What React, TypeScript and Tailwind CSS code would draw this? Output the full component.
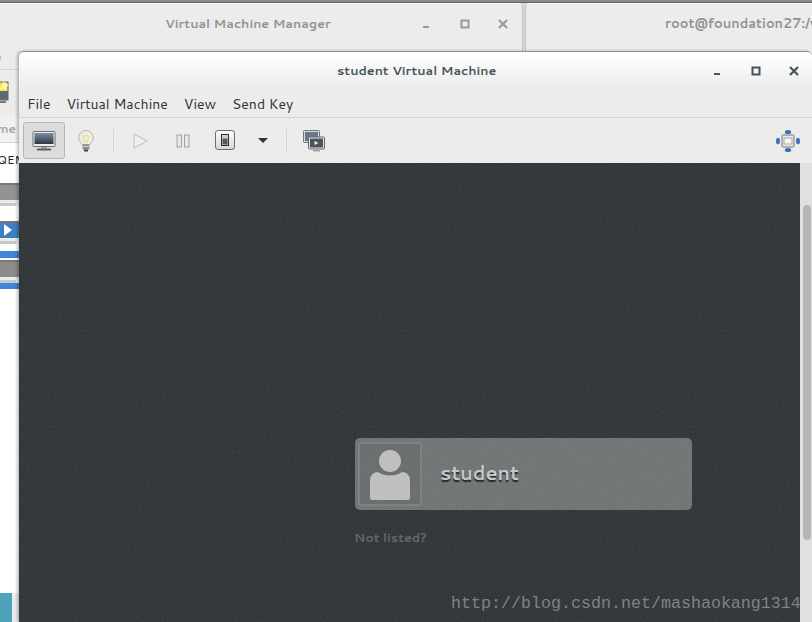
import React from "react";

const uiFont = "font-['Cantarell','Noto_Sans',sans-serif]";

function WindowButtons({ dim }: { dim?: boolean }) {
  const c = dim ? "#9a9a9a" : "#47545c";
  return (
    <div className="flex items-center gap-[28px]">
      <svg width="10" height="10" viewBox="0 0 10 10">
        <rect x="1" y="7" width="6" height="2" fill={c} />
      </svg>
      <svg width="10" height="10" viewBox="0 0 10 10">
        <path d="M1.500 1.500h7v7h-7z" fill="none" stroke={c} strokeWidth="2" />
      </svg>
      <svg width="10" height="10" viewBox="0 0 10 10">
        <path d="M1 1l8 8M9 1l-8 8" fill="none" stroke={c} strokeWidth="2.2" />
      </svg>
    </div>
  );
}

function MonitorIcon() {
  return (
    <svg width="24" height="20" viewBox="0 0 24 20">
      <defs>
        <linearGradient id="scr" x1="0" y1="0" x2="0" y2="1">
          <stop offset="0" stopColor="#7d8ea6" />
          <stop offset="1" stopColor="#2c3644" />
        </linearGradient>
      </defs>
      <rect x="1" y="0.500" width="22" height="15" rx="1" fill="#ececec" stroke="#6f6f6f" />
      <rect x="2.500" y="2" width="19" height="11" fill="url(#scr)" />
      <rect x="9" y="16" width="6" height="1.500" fill="#999" />
      <rect x="5" y="17.500" width="14" height="2" fill="#5a5a5a" />
    </svg>
  );
}

function BulbIcon() {
  return (
    <svg width="16" height="22" viewBox="0 0 16 22">
      <path d="M8 0.500a7.300 7.300 0 0 0-7.300 7.300c0 3 2.300 4.200 3.300 6.700h8c1-2.500 3.300-3.700 3.300-6.700A7.300 7.300 0 0 0 8 0.500z" fill="#ecece8" stroke="#b4b4b0" />
      <path d="M4.500 7.500c1.500-2.500 5.500-2.500 7 0M5.500 8l2 5M10.500 8l-2 5" fill="none" stroke="#eee07a" strokeWidth="1.300" />
      <rect x="4.500" y="14.500" width="7" height="5" rx="1" fill="#8a8a8a" />
      <rect x="4.500" y="16" width="7" height="1" fill="#d5d5d5" />
      <rect x="6" y="19.500" width="4" height="2" fill="#444" />
    </svg>
  );
}

function PlayIcon() {
  return (
    <svg width="15" height="16" viewBox="0 0 15 16">
      <path d="M1 1v14l13-7z" fill="#efefef" stroke="#c6c8c8" strokeWidth="1.200" />
    </svg>
  );
}

function PauseIcon() {
  return (
    <svg width="14" height="14" viewBox="0 0 14 14">
      <rect x="1" y="1" width="4.500" height="12" fill="#e8e8e8" stroke="#a0a2a2" />
      <rect x="8.500" y="1" width="4.500" height="12" fill="#e8e8e8" stroke="#a0a2a2" />
    </svg>
  );
}

function PowerIcon() {
  return (
    <svg width="20" height="21" viewBox="0 0 20 21">
      <defs>
        <linearGradient id="pwr" x1="0" y1="0" x2="0" y2="1">
          <stop offset="0" stopColor="#fdfdfd" />
          <stop offset="1" stopColor="#d6d6d6" />
        </linearGradient>
      </defs>
      <rect x="0.500" y="0.500" width="19" height="19" rx="2.500" fill="url(#pwr)" stroke="#6d6d6d" />
      <rect x="6.500" y="4.500" width="7" height="11" fill="#cfcfcf" stroke="#2f2f2f" />
      <rect x="7.500" y="8.500" width="5" height="6" fill="#5a5a5a" />
    </svg>
  );
}

function SnapshotIcon() {
  return (
    <svg width="22" height="22" viewBox="0 0 22 22">
      <rect x="0.500" y="0.500" width="16" height="12" rx="1" fill="#d9dbdc" stroke="#777" />
      <rect x="2" y="2" width="13" height="9" fill="#6a7888" />
      <rect x="5.500" y="7" width="16" height="12" rx="1" fill="#e6e6e6" stroke="#666" />
      <rect x="7" y="8.500" width="13" height="9" fill="#47535f" />
      <path d="M11.500 11v4l4-2z" fill="#eee" />
      <rect x="10" y="19.500" width="7" height="2" fill="#a5a5a5" />
    </svg>
  );
}

function FullscreenIcon() {
  return (
    <svg width="24" height="22" viewBox="0 0 24 22">
      <ellipse cx="12" cy="2" rx="3.200" ry="2" fill="#3f70b5" />
      <ellipse cx="12" cy="20" rx="3.200" ry="2" fill="#3f70b5" />
      <ellipse cx="2" cy="11" rx="2" ry="3.200" fill="#3f70b5" />
      <ellipse cx="22" cy="11" rx="2" ry="3.200" fill="#3f70b5" />
      <rect x="6" y="5" width="12" height="12" rx="1" fill="#e9e9e6" stroke="#777" />
      <rect x="8" y="8" width="8" height="6" fill="#f6f6f6" stroke="#aaa" />
    </svg>
  );
}

function Avatar() {
  return (
    <svg width="40" height="50" viewBox="0 0 40 50">
      <circle cx="20" cy="11" r="11" fill="#bdbebd" />
      <path d="M0 30a8 8 0 0 1 8-8c3 2 7 3.500 12 3.500S29 24 32 22a8 8 0 0 1 8 8v18a2 2 0 0 1-2 2H2a2 2 0 0 1-2-2z" fill="#bdbebd" />
    </svg>
  );
}

function Noise() {
  return (
    <svg className="absolute inset-0 w-full h-full pointer-events-none" aria-hidden="true">
      <filter id="grain">
        <feTurbulence type="fractalNoise" baseFrequency="0.8" numOctaves="2" />
        <feColorMatrix values="0 0 0 0 1  0 0 0 0 1  0 0 0 0 1  0 0 0 0.5 -0.12" />
      </filter>
      <rect width="100%" height="100%" filter="url(#grain)" opacity="0.22" />
    </svg>
  );
}

function ToolbarDivider() {
  return <div className="w-px h-[24px] bg-[#d4d4d4]" />;
}

function SliverMonitor({ screen, stand }: { screen: string; stand?: boolean }) {
  return (
    <div className="flex flex-col">
      <div className={`h-[17px] border-t-[2px] border-[#777] ${screen}`} />
      {stand && <div className="mt-[3px] h-[3px] w-[16px] bg-[#c9c9c9]" />}
    </div>
  );
}

export default function App() {
  return (
    <div className={`relative w-[812px] h-[622px] overflow-hidden bg-[#d8d8d8] ${uiFont}`}>
      <div className="h-[3px] bg-[#8a8a8a] border-b border-[#666]" />

      {/* manager window behind */}
      <div className="absolute left-0 top-[3px] w-[523px] h-[619px] bg-[#ececec] border-t border-white border-r-[#c4c4c4] border-r rounded-tr-[5px]">
        <div className="flex items-center h-[39px]">
          <span className="ml-[165px] text-[12.7px] font-bold text-[#929292]">Virtual Machine Manager</span>
          <div className="ml-auto mr-[14px]">
            <WindowButtons dim />
          </div>
        </div>
      </div>

      {/* terminal window behind */}
      <div className="absolute left-[525px] top-[3px] w-[287px] h-[619px] bg-[#ececec] border-t border-white border-l-[#c4c4c4] border-l rounded-tl-[5px]">
        <div className="h-[39px] flex items-center pl-[139px] whitespace-nowrap text-[13px] font-bold text-[#929292]">
          root@foundation27:/v
        </div>
      </div>

      {/* sliver of the manager's vm list */}
      <div className="absolute left-0 top-[50px] w-[19px] h-[572px] flex flex-col overflow-hidden">
        <div className="h-[20px] bg-[#ececec] border-b border-[#d4d4d4] text-[12px] leading-[14px] text-[#999] overflow-hidden">
          <span className="block -ml-[5px]">e</span>
        </div>
        <div className="h-[46px] bg-[#ececec] pt-[11px]">
          <svg width="10" height="23" viewBox="0 0 10 23">
            <rect x="-4" y="1" width="12" height="18" fill="#f3e75c" stroke="#666" />
            <rect x="-4" y="10" width="12" height="9" fill="#5d6b78" />
            <path d="M4 0l1.500 3 3 .500-2 2.500.500 3-3-1.500L0 9z" fill="#fff6a0" />
            <rect x="0" y="20" width="6" height="2" fill="#777" />
          </svg>
        </div>
        <div className="h-[27px] bg-[#f1f1f1] border-b border-[#d8d8d8] text-[12px] font-bold text-[#aaa] leading-[26px] flex justify-end pr-[3px] overflow-hidden">
          me
        </div>
        <div className="h-[40px] bg-white text-[12px] text-[#222] leading-[34px] overflow-hidden whitespace-nowrap">
          <span className="block -ml-[3px]">QEMU</span>
        </div>
        <SliverMonitor screen="bg-[#929292]" stand />
        <div className="h-[15px] bg-white" />
        <div className="relative">
          <SliverMonitor screen="bg-[#3d7fc4]" stand />
          <div className="absolute left-[4px] top-[3px] w-0 h-0 border-y-[6px] border-y-transparent border-l-[8px] border-l-white" />
        </div>
        <div className="h-[7px] bg-white" />
        <div className="h-[7px] bg-[#3f85d8]" />
        <div className="h-[2px] bg-white" />
        <SliverMonitor screen="bg-[#8c8c8c]" stand />
        <div className="h-[6px] bg-[#3f85d8]" />
        <div className="flex-1 bg-white" />
        <div className="h-[29px] w-[12px] bg-[#4ea3bb]" />
      </div>

      {/* student vm window */}
      <div className="absolute left-[19px] top-[51px] w-[793px] h-[571px] flex flex-col bg-[#ececec] rounded-t-[5px] shadow-[-2px_0_3px_rgba(0,0,0,0.25)]">
        <div className="h-[38px] flex items-center relative bg-gradient-to-b from-white to-[#ececec] rounded-t-[5px] border-t border-[#8f8f8f]">
          <span className="ml-[318px] text-[12.7px] font-bold text-[#47545c]">student Virtual Machine</span>
          <div className="ml-auto mr-[13px]">
            <WindowButtons />
          </div>
        </div>
        <div className="h-[29px] flex items-center gap-[16px] pl-[8px] pt-[3px] text-[14px] text-[#2e3436] border-b border-[#d2d2d2]">
          <span>File</span>
          <span>Virtual Machine</span>
          <span>View</span>
          <span>Send Key</span>
        </div>
        <div className="h-[45px] flex items-center pl-[4px] pr-[12px]">
          <div className="w-[42px] h-[37px] flex items-center justify-center bg-[#dcdcdc] border border-[#b5b5b5] rounded-[3px]">
            <MonitorIcon />
          </div>
          <div className="w-[42px] flex justify-center">
            <BulbIcon />
          </div>
          <div className="ml-[6px] mr-[19px]">
            <ToolbarDivider />
          </div>
          <PlayIcon />
          <div className="ml-[28px]">
            <PauseIcon />
          </div>
          <div className="ml-[25px]">
            <PowerIcon />
          </div>
          <div className="ml-[23px] w-0 h-0 border-x-[5px] border-x-transparent border-t-[5px] border-t-[#2e3436]" />
          <div className="ml-[18px] mr-[16px]">
            <ToolbarDivider />
          </div>
          <SnapshotIcon />
          <div className="ml-auto">
            <FullscreenIcon />
          </div>
        </div>

        <div className="flex-1 flex min-h-0">
          <div className="flex-1 relative bg-[#2e3436]">
            <div className="absolute left-[336px] top-[275px] w-[337px] h-[72px] flex items-center bg-[#6f7374] rounded-[5px]">
              <div className="ml-[3px] w-[64px] h-[64px] flex items-end justify-center pb-[4px] bg-[#686c6d] border-[2px] border-[#7c7f80] rounded-[2px]">
                <Avatar />
              </div>
              <span className="ml-[18px] -translate-y-[1px] text-[19.4px] font-bold text-[#c5c6c6] [text-shadow:0_2px_1px_rgba(0,0,0,0.7)]">student</span>
            </div>
            <div className="absolute left-[335px] top-[365px] text-[12.7px] font-bold text-[#5e6365]">Not listed?</div>
            <div className="absolute left-[432px] top-[428px] whitespace-nowrap font-['Liberation_Mono',monospace] text-[16.67px] text-[#7c8080]">
              http://blog.csdn.net/mashaokang1314
            </div>
            <Noise />
          </div>
          <div className="w-[12px] bg-[#e0e0e0] pt-[42px] pl-[3px]">
            <div className="w-[8px] h-[335px] bg-[#b5b5b5] rounded-[4px]" />
          </div>
        </div>
      </div>
    </div>
  );
}
